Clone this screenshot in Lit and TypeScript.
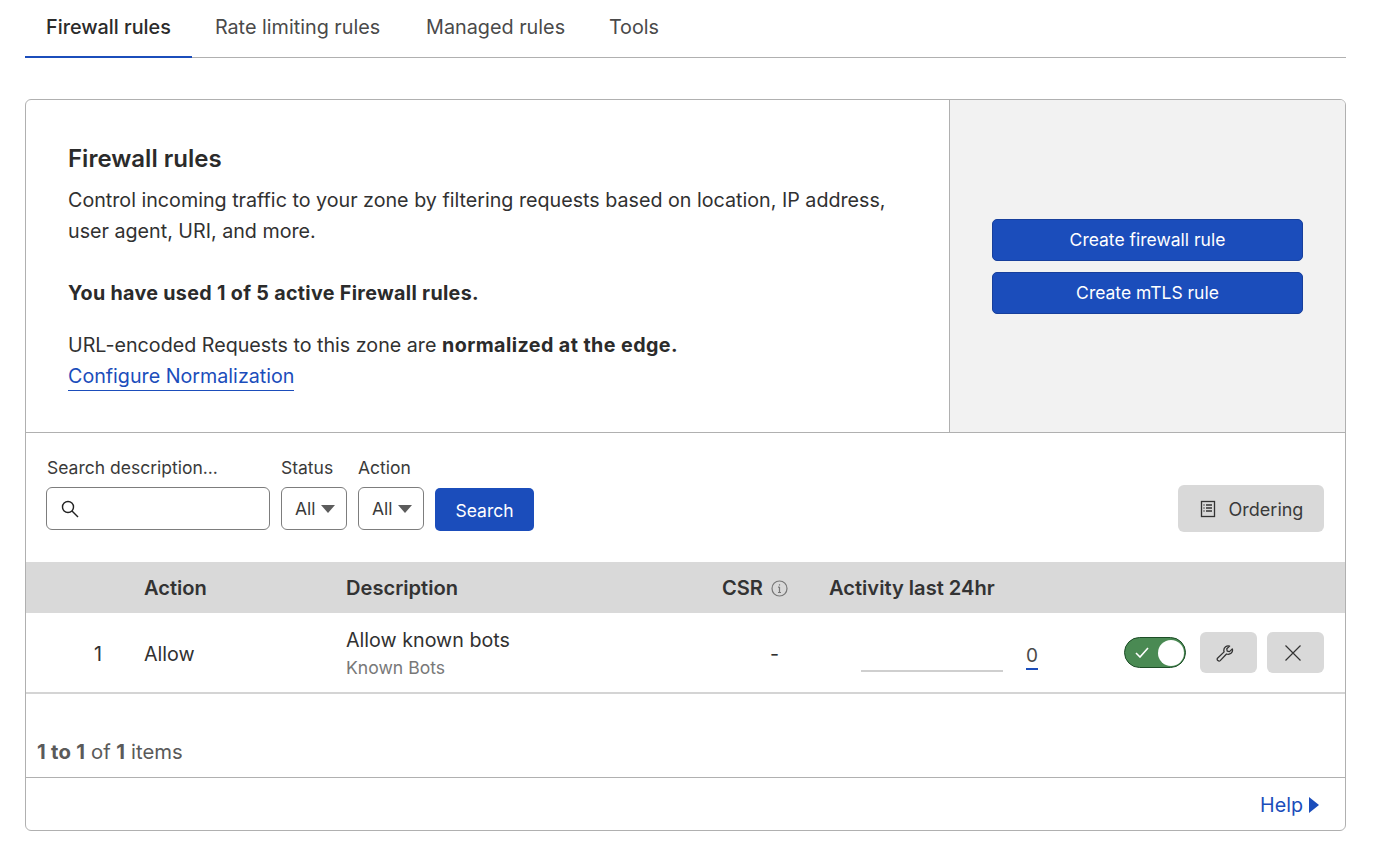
import {css, LitElement, html} from 'lit';
import {customElement} from 'lit/decorators.js';

@customElement('app-root')
export class AppRoot extends LitElement {
  static styles = css`
    :host {
      display: block;
      box-sizing: border-box;
      height: 862px;
      padding: 0 34px 0 25px;
      background: #fff;
      color: #313131;
      font-family: Inter, "Liberation Sans", sans-serif;
      font-size: 19.7px;
      line-height: 31px;
    }
    * { box-sizing: border-box; }
    .tabs {
      display: flex;
      height: 58px;
      border-bottom: 1px solid #b0b0b0;
    }
    .tab {
      padding: 12px 22.8px 0 23px;
      color: #4a4a4a;
      font-size: 19.8px;
    }
    .tab:last-child { padding-left: 21px; }
    .tab.active {
      padding: 12px 21px 0;
      color: #2b2b2b;
      font-weight: 500;
      border-bottom: 2px solid #1b4dbb;
      height: 58px;
    }
    .card {
      margin-top: 41px;
      height: 732px;
      border: 1px solid #b0b0b0;
      border-radius: 6px;
      display: flex;
      flex-direction: column;
      overflow: hidden;
    }
    .hero {
      display: flex;
      height: 333px;
      border-bottom: 1px solid #b0b0b0;
      flex: none;
    }
    .intro {
      width: 924px;
      padding: 43px 42px 0;
      border-right: 1px solid #b0b0b0;
    }
    h2 {
      margin: 0 0 11px;
      font-size: 24px;
      line-height: 31px;
      font-weight: 600;
      color: #2b2b2b;
    }
    p { margin: 0; }
    .used { margin: 31px 0 21px; font-weight: 700; letter-spacing: 0.32px; color: #2b2b2b; }
    b { font-weight: 700; letter-spacing: 0.42px; color: #2b2b2b; }
    .link {
      color: #1b4dbb;
      border-bottom: 1px solid #1b4dbb;
      display: inline-block;
      line-height: 28px;
    }
    .cta {
      flex: 1;
      background: #f2f2f2;
      padding: 0 42px;
      display: flex;
      flex-direction: column;
      justify-content: center;
      gap: 11px;
    }
    .btn {
      display: flex;
      align-items: center;
      justify-content: center;
      background: #1b4dbb;
      color: #fff;
      border-radius: 5px;
      font-size: 17.5px;
    }
    .cta .btn { height: 42px; border: 1px solid #173f9c; }
    .filters {
      flex: none;
      height: 129px;
      padding: 19px 21px 0 20px;
      display: flex;
      align-items: flex-start;
      gap: 11px;
    }
    .field { display: flex; flex-direction: column; }
    .field label { font-size: 17.5px; line-height: 32px; height: 35px; color: #3a3a3a; }
    .field:first-child label { padding-left: 1px; }
    .input {
      width: 224px;
      height: 43px;
      border: 1px solid #7d7d7d;
      border-radius: 6px;
      padding-left: 13px;
      display: flex;
      align-items: center;
    }
    .select {
      height: 43px;
      width: 66px;
      border: 1px solid #7d7d7d;
      border-radius: 6px;
      padding-left: 13px;
      display: flex;
      align-items: center;
      gap: 5px;
      font-size: 17.5px;
      color: #3a3a3a;
    }
    .caret {
      width: 0;
      height: 0;
      border-left: 7px solid transparent;
      border-right: 7px solid transparent;
      border-top: 8px solid #5c5c5c;
    }
    .search { width: 99px; height: 43px; margin-top: 36px; padding-top: 1px; }
    .ordering {
      margin-left: auto;
      margin-top: 33px;
      width: 146px;
      height: 47px;
      padding: 1px 0 0 1px;
      border-radius: 6px;
      background: #d9d9d9;
      display: flex;
      align-items: center;
      justify-content: center;
      gap: 13px;
      font-size: 18px;
      color: #3a3a3a;
    }
    .row {
      display: grid;
      grid-template-columns: 118px 202px 376px 107px 1fr;
      flex: none;
    }
    .head {
      height: 51px;
      padding-top: 2px;
      background: #d9d9d9;
      align-items: center;
      font-size: 20.1px;
      font-weight: 600;
      color: #333;
    }
    .csr { display: flex; align-items: center; gap: 8px; }
    .csr svg { flex: none; }
    .body {
      height: 81px;
      border-bottom: 2px solid #d4d4d4;
      align-items: center;
    }
    .num { text-align: right; padding: 4px 42px 0 0; }
    .allow { padding-top: 4px; }
    .sub { font-size: 17.6px; line-height: 24px; color: #787878; }
    .desc { margin-top: -1px; }
    .dash { text-align: right; padding: 4px 50px 0 0; }
    .activity { display: flex; align-items: center; padding-left: 32px; padding-right: 21px; }
    .spark { width: 142px; height: 2px; background: #cfcfcf; margin-top: 37px; }
    .count {
      margin-left: 23px;
      height: 28px;
      line-height: 28px;
      margin-top: 6px;
      color: #4a4a4a;
      border-bottom: 2px solid #1b4dbb;
      font-size: 19px;
    }
    .toggle {
      margin-left: auto;
      width: 62px;
      height: 31px;
      border-radius: 16px;
      background: #4a8a53;
      border: 1.5px solid #1d4d27;
      display: flex;
      align-items: center;
      padding: 0 1px 0 10px;
      justify-content: space-between;
    }
    .knob { width: 26px; height: 26px; border-radius: 50%; background: #fff; }
    .icon-btn {
      width: 57px;
      height: 41px;
      padding-right: 6px;
      background: #d9d9d9;
      border-radius: 6px;
      display: flex;
      align-items: center;
      justify-content: center;
      margin-left: 10px;
    }
    .toggle + .icon-btn { margin-left: 14px; padding-right: 8px; }
    .count-text {
      flex: 1;
      padding: 42px 0 0 11px;
      border-bottom: 1px solid #b0b0b0;
      color: #5a5a5a;
      font-size: 20.3px;
    }
    .count-text b { color: #5a5a5a; letter-spacing: 0.25px; }
    .help {
      flex: none;
      height: 52px;
      padding: 3px 26px 0 0;
      display: flex;
      align-items: center;
      justify-content: flex-end;
      gap: 6px;
      color: #1b4dbb;
    }
    .help svg { margin-top: -1px; }
  `;

  render() {
    return html`
      <nav class="tabs">
        <div class="tab active">Firewall rules</div>
        <div class="tab">Rate limiting rules</div>
        <div class="tab">Managed rules</div>
        <div class="tab">Tools</div>
      </nav>
      <section class="card">
        <div class="hero">
          <div class="intro">
            <h2>Firewall rules</h2>
            <p>Control incoming traffic to your zone by filtering requests based on location, IP address, user agent, URI, and more.</p>
            <p class="used">You have used 1 of 5 active Firewall rules.</p>
            <p>URL-encoded Requests to this zone are <b>normalized at the edge.</b></p>
            <span class="link">Configure Normalization</span>
          </div>
          <div class="cta">
            <div class="btn">Create firewall rule</div>
            <div class="btn">Create mTLS rule</div>
          </div>
        </div>
        <div class="filters">
          <div class="field">
            <label>Search description...</label>
            <div class="input">
              <svg width="20" height="20" viewBox="0 0 20 20" fill="none" stroke="#222" stroke-width="1.4">
                <circle cx="8" cy="8" r="5.5"/><path d="M12 12l6 6"/>
              </svg>
            </div>
          </div>
          <div class="field">
            <label>Status</label>
            <div class="select">All<span class="caret"></span></div>
          </div>
          <div class="field">
            <label>Action</label>
            <div class="select">All<span class="caret"></span></div>
          </div>
          <div class="btn search">Search</div>
          <div class="ordering">
            <svg width="16" height="18" viewBox="0 0 16 18" fill="none" stroke="#333" stroke-width="1.3">
              <rect x="1.5" y="1.5" width="13" height="15"/>
              <path d="M6 5h6M6 8h6M6 11h6M3.5 5h1M3.5 8h1M3.5 11h1"/>
            </svg>
            Ordering
          </div>
        </div>
        <div class="row head">
          <span></span>
          <span>Action</span>
          <span>Description</span>
          <span class="csr">CSR
            <svg width="17" height="17" viewBox="0 0 17 17" fill="none" stroke="#777" stroke-width="1.2">
              <circle cx="8.5" cy="8.5" r="7.5"/><path d="M8.5 7v5.5M7 7.2h1.5M7 12.5h3M8.5 4.2v1.2"/>
            </svg>
          </span>
          <span>Activity last 24hr</span>
        </div>
        <div class="row body">
          <span class="num">1</span>
          <span class="allow">Allow</span>
          <div class="desc">
            <div>Allow known bots</div>
            <div class="sub">Known Bots</div>
          </div>
          <span class="dash">-</span>
          <div class="activity">
            <div class="spark"></div>
            <span class="count">0</span>
            <div class="toggle">
              <svg width="14" height="11" viewBox="0 0 14 11" fill="none" stroke="#fff" stroke-width="1.6"><path d="M1 6l4 4 8-9"/></svg>
              <span class="knob"></span>
            </div>
            <div class="icon-btn">
              <svg width="18" height="18" viewBox="0 0 18 18" fill="none" stroke="#333" stroke-width="1.3" stroke-linejoin="round">
                <path d="M1.5 14.2l6.6-6.3c-.7-2.2 0-4 1.5-5.2 1.2-.9 2.7-1.1 4-.6l-2.8 2.7.4 2.3 2.3.5 2.8-2.7c.5 1.5.1 3-1 4.1-1.3 1.2-3 1.6-4.8 1L4.2 16.6c-.6.6-1.6.6-2.3 0-.7-.7-.9-1.7-.4-2.4z"/>
              </svg>
            </div>
            <div class="icon-btn">
              <svg width="18" height="18" viewBox="0 0 18 18" fill="none" stroke="#333" stroke-width="1.2"><path d="M1.5 1.5l15 15M16.5 1.5l-15 15"/></svg>
            </div>
          </div>
        </div>
        <div class="count-text"><b>1 to 1</b> of <b>1</b> items</div>
        <div class="help">Help
          <svg width="10" height="16" viewBox="0 0 10 16" fill="#1b4dbb"><path d="M0 0l10 8-10 8z"/></svg>
        </div>
      </section>
    `;
  }
}
